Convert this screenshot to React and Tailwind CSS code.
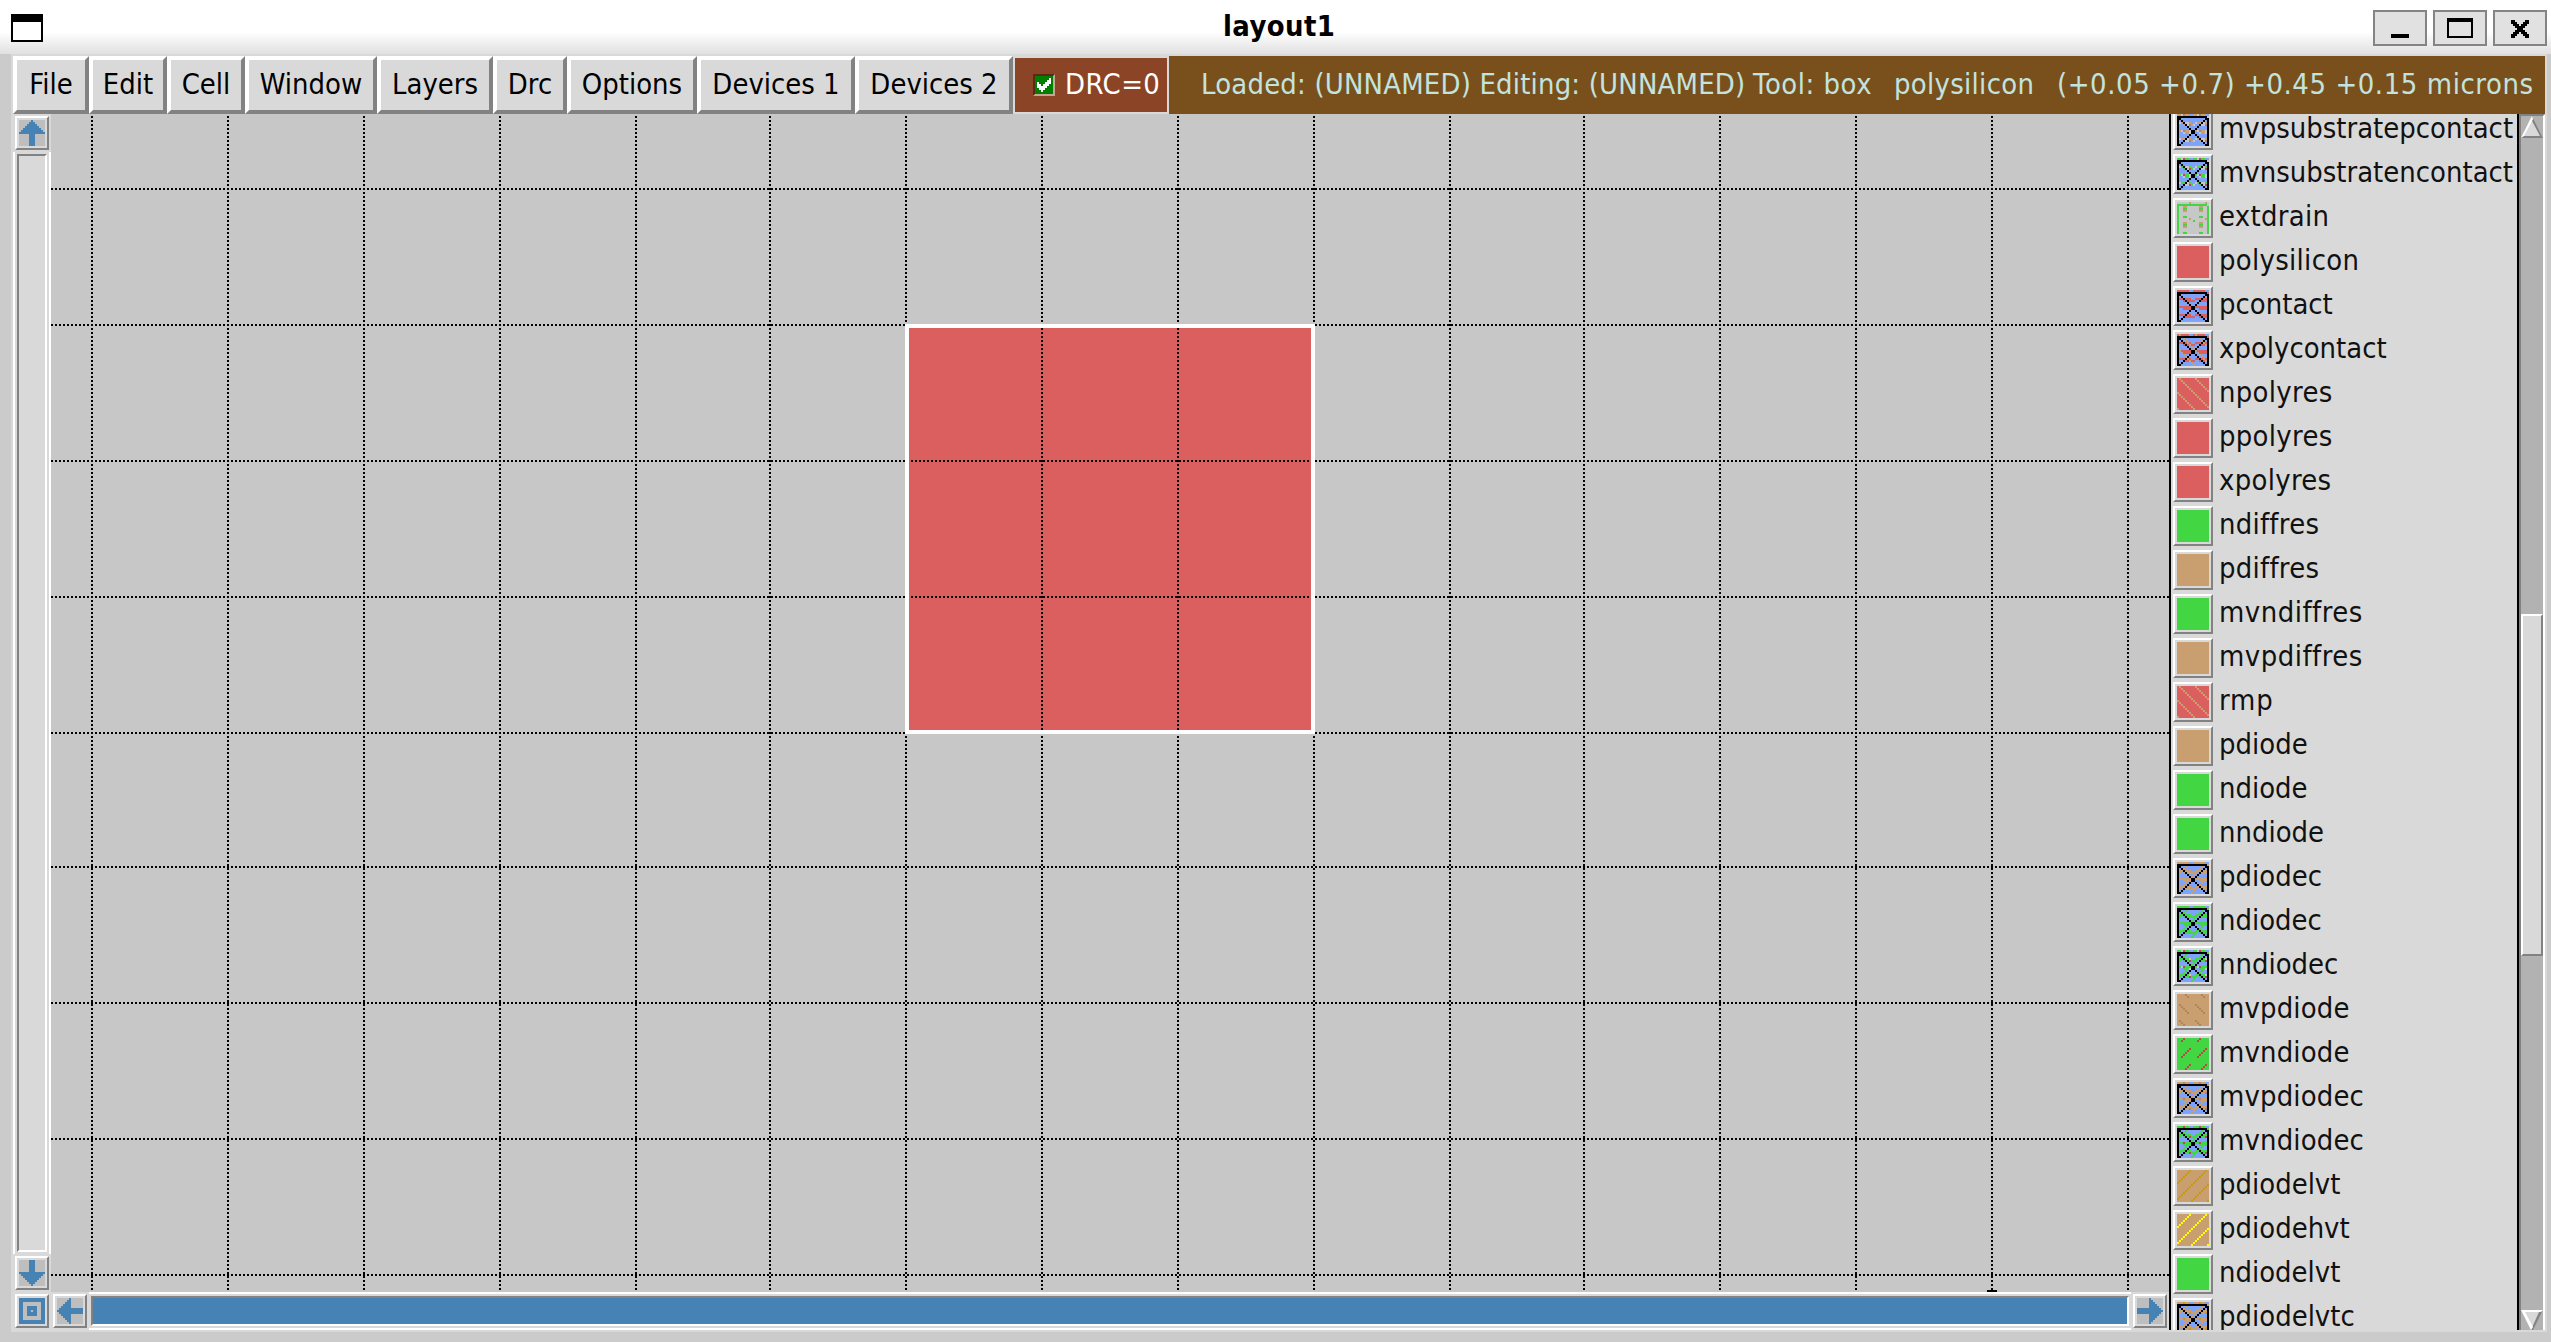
import React from "react";

const RED = "#db5f5f";
const GREEN = "#42d742";
const TAN = "#c99f70";
const BLUE = "#7da3fb";
const GRAY = "#c7c7c7";
const CRIMSON = "#b84c4c";
const BROWN = "#ae8462";
const STEEL = "#4682b4";

const mod = (n, m) => ((n % m) + m) % m;

const solid = (color) => () => color;
const backslash = (base, line) => (r, c) => (mod(c - r, 8) === 1 ? line : base);
const slash = (base, line) => (r, c) => (mod(c + r, 8) === 6 ? line : base);
const dashRow = (r) => [5, 6, 7, 0, 1].includes(r % 8);
const dashBack = (base, line) => (r, c) => (dashRow(r) && mod(c - r, 8) === 4 ? line : base);
const dashSlash = (base, line) => (r, c) => (dashRow(r) && mod(c + r, 8) === 3 ? line : base);

function extdrain(r, c) {
  if (r === 0) return c === 6 || c === 14 ? TAN : GRAY;
  if (r === 1 || c === 0 || c === 15) return r === 1 && c === 15 ? GRAY : GREEN;
  const k = c % 8;
  if (k === 3 || k === 4) {
    if (r % 4 === 3) return GREEN;
    if (r % 8 === 2 || r % 8 === 4) return TAN;
  }
  if (r === 8 && (c === 6 || c === 14)) return TAN;
  if (r === 9 && c === 8) return GREEN;
  return GRAY;
}

const onStripe = (r, c) => {
  const k = c % 8;
  if (r === 0) return k < 6;
  if (r < 3) return r === 1 && c === 15;
  if (r % 4 === 0) return k >= 1 && k <= 6;
  if (r % 4 === 1) return k >= 3 || k === 0;
  return false;
};

const contact = (fill) => (r, c) => {
  if (r === 1 && c < 15) return "#000";
  if (r >= 2 && (c === 0 || c === 15)) return "#000";
  if (r >= 2 && (c === r - 1 || c === 16 - r)) return "#000";
  return fill(r, c) || BLUE;
};

const stripes = (color) => contact((r, c) => onStripe(r, c) && color);
const crossStripes = (color, line) =>
  contact((r, c) => (mod(c - r, 8) === 1 ? line : onStripe(r, c) && color));
const weave = (color) =>
  contact((r, c) => (onStripe(r, c) || (mod(c + r, 8) === 6 && r > 1)) && color);
const speckle = (color, dot, gap) =>
  contact((r, c) => {
    if (!onStripe(r, c)) return gap === color && mod(c + r, 8) === 6 && r > 1 && color;
    if (dashRow(r + 1) && mod(c + r, 8) === 3) return dot;
    return mod(c + (r >> 1), 4) < 2 ? color : gap;
  });
const speckleWeave = (color, dot, gap) =>
  contact((r, c) => {
    if (mod(c + r, 8) === 6 && r > 1) return color;
    if (!onStripe(r, c)) return false;
    if (mod(c + r, 8) === 3) return dot;
    return c % 4 === 2 ? gap : color;
  });

const LAYERS = [
  ["mvpsubstratepcontact", speckle(TAN, BROWN, GRAY)],
  ["mvnsubstratencontact", speckle(GREEN, CRIMSON, GRAY)],
  ["extdrain", extdrain, "tracking-[0.3px]"],
  ["polysilicon", solid(RED), "tracking-[0.3px]"],
  ["pcontact", stripes(RED)],
  ["xpolycontact", crossStripes(RED, TAN)],
  ["npolyres", backslash(RED, TAN), "tracking-[0.3px]"],
  ["ppolyres", solid(RED), "tracking-[0.3px]"],
  ["xpolyres", solid(RED), "tracking-[0.3px]"],
  ["ndiffres", solid(GREEN), "tracking-[0.25px]"],
  ["pdiffres", solid(TAN), "tracking-[0.25px]"],
  ["mvndiffres", solid(GREEN), "tracking-[0.5px]"],
  ["mvpdiffres", solid(TAN), "tracking-[0.5px]"],
  ["rmp", backslash(RED, TAN), "tracking-[0.8px]"],
  ["pdiode", solid(TAN)],
  ["ndiode", solid(GREEN)],
  ["nndiode", solid(GREEN)],
  ["pdiodec", weave(TAN)],
  ["ndiodec", weave(GREEN)],
  ["nndiodec", speckleWeave(GREEN, CRIMSON, GRAY)],
  ["mvpdiode", dashBack(TAN, BROWN), "tracking-[0.15px]"],
  ["mvndiode", dashSlash(GREEN, CRIMSON), "tracking-[0.15px]"],
  ["mvpdiodec", speckle(TAN, BROWN, TAN), "tracking-[0.15px]"],
  ["mvndiodec", speckle(GREEN, CRIMSON, GREEN), "tracking-[0.15px]"],
  ["pdiodelvt", slash(TAN, "#c69a12")],
  ["pdiodehvt", slash(TAN, "#ffff00")],
  ["ndiodelvt", solid(GREEN)],
  ["pdiodelvtc", speckle(TAN, "#c69a12", TAN)],
];

const MENUS = [
  ["File", "w-[76px]"],
  ["Edit", "w-[78px]"],
  ["Cell", "w-[78px]"],
  ["Window", "w-[132px]"],
  ["Layers", "w-[116px]"],
  ["Drc", "w-[74px]"],
  ["Options", "w-[130px]"],
  ["Devices 1", "w-[158px]"],
  ["Devices 2", "w-[158px]"],
];

const COLUMNS = [91, 227, 363, 499, 635, 769, 905, 1041, 1177, 1313, 1449, 1583, 1719, 1855, 1991, 2127];
const ROWS = [188, 324, 460, 596, 732, 866, 1002, 1138, 1274];

function Label({ children, className = "" }) {
  return (
    <span className={`block shrink-0 whitespace-pre text-[26px] leading-[30px] origin-[0_24px] scale-y-[1.09] ${className}`}>
      {children}
    </span>
  );
}

function Swatch({ paint }) {
  const cells = [];
  for (let r = 0; r < 16; r++) {
    let c = 0;
    while (c < 16) {
      const color = paint(r, c);
      let end = c + 1;
      while (end < 16 && paint(r, end) === color) end++;
      cells.push(<rect key={`${r}-${c}`} x={c} y={r} width={end - c} height="1" fill={color} />);
      c = end;
    }
  }
  return (
    <div className="size-10 shrink-0 border-2 border-t-white border-l-white border-r-[#828282] border-b-[#828282] p-[2px]">
      <svg className="block size-8" viewBox="0 0 16 16" shapeRendering="crispEdges">{cells}</svg>
    </div>
  );
}

function ArrowButton({ turn = "" }) {
  return (
    <div className="size-[34px] shrink-0 border-2 border-t-white border-l-white border-r-[#828282] border-b-[#828282] bg-[#d9d9d9] p-[2px]">
      <svg className={`block size-[26px] bg-[#bebebe] ${turn}`} viewBox="0 0 13 13" shapeRendering="crispEdges" fill={STEEL}>
        {[0, 1, 2, 3, 4, 5, 6].map((i) => (
          <rect key={i} x={6 - i} y={i} width={1 + 2 * i} height="1" />
        ))}
        <rect x="5" y="7" width="3" height="6" />
      </svg>
    </div>
  );
}

function TitleBar() {
  const frame = "flex h-9 w-[54px] items-center justify-center border-2 border-[#848484] bg-[#e1e1e1]";
  return (
    <div className="flex h-[54px] shrink-0 items-start bg-[linear-gradient(#fff_0,#fff_32px,#e0e0e0_54px)] pl-[11px] pr-1">
      <div className="mt-[14px] h-7 w-8 border-2 border-t-8 border-black bg-white" />
      <div className="ml-[1180px] mt-3 w-[140px]">
        <Label className="font-bold tracking-[0.4px] text-black">layout1</Label>
      </div>
      <div className="ml-auto mt-[10px] flex gap-[6px]">
        <div className={frame}>
          <div className="mt-4 h-1 w-[18px] bg-black" />
        </div>
        <div className={frame}>
          <div className="h-5 w-[26px] border-2 border-t-4 border-black" />
        </div>
        <div className={frame}>
          <svg className="mt-[2px] h-[18px] w-[18px]" viewBox="0 0 9 9" shapeRendering="crispEdges">
            <path d="M0 0h2v1h1v1h1v1h1v-1h1v-1h1v-1h2v2h-1v1h-1v1h-1v1h1v1h1v1h1v2h-2v-1h-1v-1h-1v-1h-1v1h-1v1h-1v1h-2v-2h1v-1h1v-1h1v-1h-1v-1h-1v-1h-1z" />
          </svg>
        </div>
      </div>
    </div>
  );
}

function MenuBar() {
  return (
    <div className="flex h-[58px] shrink-0 pl-[2px]">
      {MENUS.map(([name, width]) => (
        <div
          key={name}
          className={`${width} flex shrink-0 justify-center border-4 border-t-white border-l-white border-r-[#828282] border-b-[#828282] pt-[10px] text-black`}
        >
          <Label>{name}</Label>
        </div>
      ))}
      <div className="m-[2px] flex w-[152px] shrink-0 bg-[#8b4526] pl-[18px] pt-3 text-white">
        <div className="mt-1 size-[22px] border-2 border-t-[#5a2a18] border-l-[#5a2a18] border-b-[#c6a593] border-r-[#c6a593] bg-[#007f00]">
          <svg className="block size-[18px]" viewBox="0 0 9 9" shapeRendering="crispEdges" fill="#fff">
            <path d="M1 3h1v1h1v1h1v-1h1v-1h1v-1h1v-1h1v3h-1v1h-1v1h-1v1h-1v1h-1v-1h-1v-1h-1z" />
          </svg>
        </div>
        <Label className="ml-[10px] tracking-[0.4px]">DRC=0</Label>
      </div>
      <div className="flex grow bg-[#79501c] pt-[14px] pl-[32px] text-[#c3e3df]">
        <Label className="w-[552px] tracking-[0.19px]">Loaded: (UNNAMED) Editing: (UNNAMED)</Label>
        <Label className="w-[141px] tracking-[0.5px]">Tool: box</Label>
        <Label className="w-[163px] tracking-[0.3px]">polysilicon</Label>
        <Label className="tracking-[0.57px]">(+0.05 +0.7) +0.45 +0.15 microns</Label>
      </div>
    </div>
  );
}

function VerticalScroll() {
  return (
    <div className="flex w-10 shrink-0 flex-col items-start pt-[2px] pb-[2px]">
      <div className="pl-1"><ArrowButton /></div>
      <div className="ml-[2px] mt-[2px] w-[38px] grow border-x-2 border-white px-[2px] py-[2px]">
        <div className="h-full w-full border-2 border-t-[#828282] border-l-[#828282] border-r-white border-b-white" />
      </div>
      <div className="mt-[2px] pl-1"><ArrowButton turn="rotate-180" /></div>
    </div>
  );
}

function HorizontalScroll() {
  return (
    <div className="flex h-10 shrink-0 pl-1 pr-[2px]">
      <div className="mt-[2px] size-[34px] shrink-0 border-2 border-t-white border-l-white border-r-[#828282] border-b-[#828282] p-[2px]">
        <svg className="block size-[26px]" viewBox="0 0 13 13" shapeRendering="crispEdges">
          <rect width="13" height="13" fill={STEEL} />
          <rect x="2" y="2" width="9" height="9" fill="#bebebe" />
          <rect x="4" y="4" width="5" height="5" fill={STEEL} />
          <rect x="6" y="6" width="1" height="1" fill="#bebebe" />
        </svg>
      </div>
      <div className="ml-1 mt-[2px]"><ArrowButton turn="-rotate-90" /></div>
      <div className="ml-[2px] h-[38px] grow border-y-2 border-white p-[2px]">
        <div className="h-full w-full border-2 border-t-[#828282] border-l-[#828282] border-r-white border-b-white bg-[#4682b4]" />
      </div>
      <div className="ml-[2px] mt-[2px]"><ArrowButton turn="rotate-90" /></div>
    </div>
  );
}

function LayoutCanvas() {
  return (
    <svg className="block h-[1178px] w-[2118px] shrink-0 bg-[#c7c7c7]" viewBox="51 114 2118 1178" shapeRendering="crispEdges">
      <rect x="905" y="324" width="410" height="410" fill={RED} />
      <g stroke="#000" strokeWidth="2" strokeDasharray="2 2">
        {COLUMNS.map((x) => <line key={x} x1={x + 1} x2={x + 1} y1="116" y2="1292" />)}
        {ROWS.map((y) => <line key={y} x1="51" x2="2169" y1={y + 1} y2={y + 1} />)}
      </g>
      <rect x="907" y="326" width="406" height="406" fill="none" stroke="#fff" strokeWidth="4" />
      <rect x="1987" y="1290" width="10" height="2" />
    </svg>
  );
}

function LayerPanel() {
  return (
    <div className="flex h-[1216px] w-[376px] shrink-0 overflow-hidden border-l-2 border-black">
      <div className="-mt-[6px] w-[346px] shrink-0">
        {LAYERS.map(([name, paint, tracking = ""]) => (
          <div key={name} className="flex h-11 pl-[2px] pt-[2px]">
            <Swatch paint={paint} />
            <div className="ml-[6px] pt-1 [font-variant-ligatures:none]"><Label className={tracking}>{name}</Label></div>
          </div>
        ))}
      </div>
      <div className="flex h-full w-7 shrink-0 flex-col border-l-2 border-black">
        <div className="flex h-full flex-col border-2 border-t-[#828282] border-l-[#828282] border-r-white border-b-0 bg-[#b2b2b2]">
          <svg className="block h-[22px] w-[22px] shrink-0" viewBox="0 0 22 22">
            <path d="M11 0L0 22H22Z" fill="#d9d9d9" />
            <path d="M11 0L22 22H0L2 20H19L10 3Z" fill="#828282" />
            <path d="M11 0L0 22L3 20L12 3Z" fill="#fff" />
          </svg>
          <div className="mt-[476px] h-[342px] shrink-0 border-2 border-t-white border-l-white border-r-[#828282] border-b-[#828282] bg-[#d9d9d9]" />
          <svg className="mt-[354px] block h-[20px] w-[22px] shrink-0" viewBox="0 0 22 20">
            <path d="M0 0H22L11 20Z" fill="#d9d9d9" />
            <path d="M22 0L12 20H10L18 2Z" fill="#828282" />
            <path d="M0 0H22L20 2H4L12 17L10 20Z" fill="#fff" />
          </svg>
        </div>
      </div>
    </div>
  );
}

export default function App() {
  return (
    <div className="flex h-[1342px] w-[2551px] flex-col overflow-hidden bg-[#cbcbcb] font-['DejaVu_Sans',sans-serif] text-[#111]">
      <TitleBar />
      <div className="ml-[11px] flex h-[1278px] w-[2536px] flex-col bg-[#d9d9d9] pt-[2px] pr-[2px]">
        <MenuBar />
        <div className="flex">
          <div className="flex w-[2158px] shrink-0 flex-col">
            <div className="flex h-[1178px]">
              <VerticalScroll />
              <LayoutCanvas />
            </div>
            <HorizontalScroll />
          </div>
          <LayerPanel />
        </div>
      </div>
    </div>
  );
}
